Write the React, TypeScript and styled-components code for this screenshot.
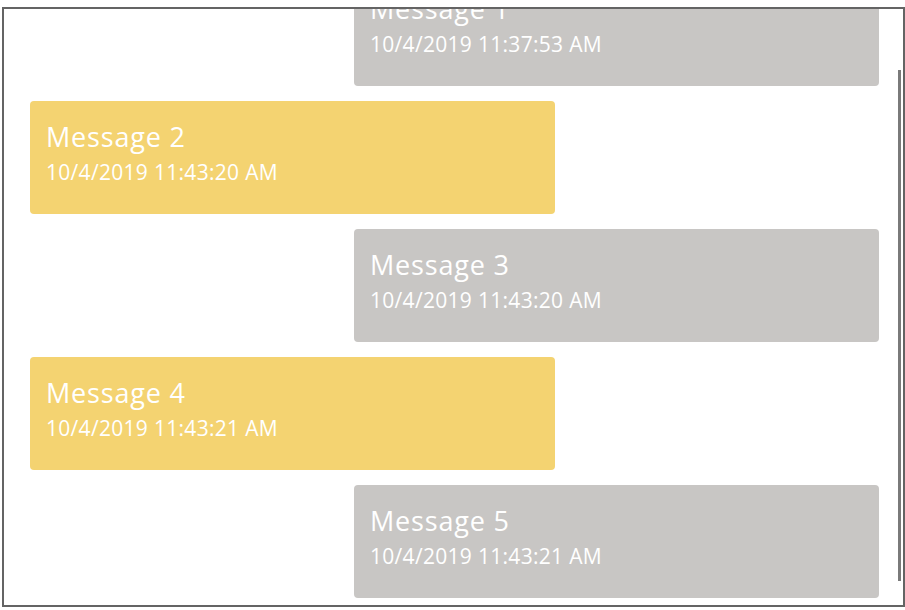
import React, { useLayoutEffect, useRef } from 'react';
import styled, { createGlobalStyle } from 'styled-components';

const GlobalStyle = createGlobalStyle`
  html, body {
    margin: 0;
    padding: 0;
    background: #fff;
  }
  body {
    font-family: 'Open Sans', 'Noto Sans', sans-serif;
  }
`;

const Page = styled.div`
  padding: 7px 0 0 2px;
`;

const Frame = styled.div`
  position: relative;
  width: 899px;
  height: 596px;
  border: 2px solid #646464;
  background: #fff;
`;

const Scroller = styled.div`
  height: 100%;
  overflow-y: auto;
  scrollbar-width: none;
  &::-webkit-scrollbar {
    display: none;
  }
`;

const List = styled.div`
  display: flex;
  flex-direction: column;
  gap: 15px;
  padding: 15px 24px 15px 26px;
`;

const Bubble = styled.div<{ $mine: boolean }>`
  width: 525px;
  height: 113px;
  box-sizing: border-box;
  align-self: ${(p) => (p.$mine ? 'flex-end' : 'flex-start')};
  background: ${(p) => (p.$mine ? '#c8c6c4' : '#f4d371')};
  border-radius: 4px;
  padding: 17px 16px 0;
  color: #fff;
  white-space: nowrap;
`;

const Title = styled.div`
  font-size: 27px;
  line-height: 37px;
  letter-spacing: 0.8px;
`;

const Stamp = styled.div`
  font-size: 21px;
  line-height: 34px;
  letter-spacing: 0.3px;
`;

const Thumb = styled.div`
  position: absolute;
  right: 2px;
  top: 61px;
  width: 3px;
  height: 511px;
  background: #7a7a7a;
`;

const messages = [
  { text: 'Message 1', time: '10/4/2019 11:37:53 AM', mine: true },
  { text: 'Message 2', time: '10/4/2019 11:43:20 AM', mine: false },
  { text: 'Message 3', time: '10/4/2019 11:43:20 AM', mine: true },
  { text: 'Message 4', time: '10/4/2019 11:43:21 AM', mine: false },
  { text: 'Message 5', time: '10/4/2019 11:43:21 AM', mine: true },
];

export default function App() {
  const ref = useRef<HTMLDivElement>(null);
  useLayoutEffect(() => {
    if (ref.current) ref.current.scrollTop = 51;
  }, []);

  return (
    <>
      <GlobalStyle />
      <Page>
        <Frame>
          <Scroller ref={ref}>
            <List>
              {messages.map((m) => (
                <Bubble key={m.text} $mine={m.mine}>
                  <Title>{m.text}</Title>
                  <Stamp>{m.time}</Stamp>
                </Bubble>
              ))}
            </List>
          </Scroller>
          <Thumb />
        </Frame>
      </Page>
    </>
  );
}
